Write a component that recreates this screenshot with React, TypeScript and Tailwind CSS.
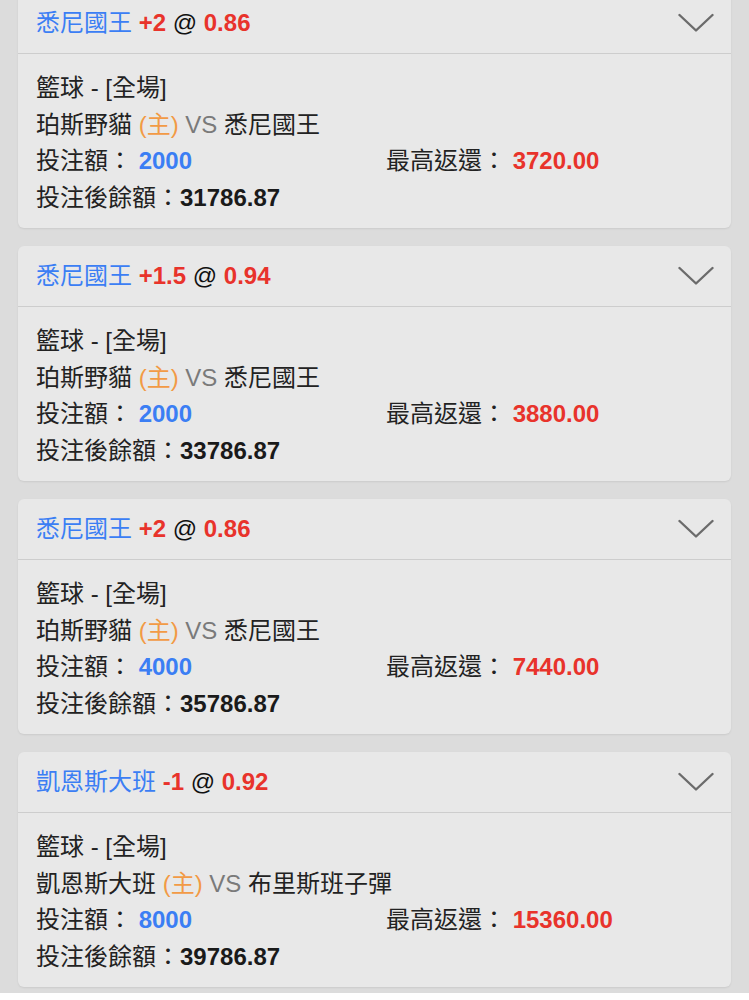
const bets = [
  { team: "悉尼國王", line: "+2", odds: "0.86", home: "珀斯野貓", away: "悉尼國王", stake: "2000", maxReturn: "3720.00", balance: "31786.87" },
  { team: "悉尼國王", line: "+1.5", odds: "0.94", home: "珀斯野貓", away: "悉尼國王", stake: "2000", maxReturn: "3880.00", balance: "33786.87" },
  { team: "悉尼國王", line: "+2", odds: "0.86", home: "珀斯野貓", away: "悉尼國王", stake: "4000", maxReturn: "7440.00", balance: "35786.87" },
  { team: "凱恩斯大班", line: "-1", odds: "0.92", home: "凱恩斯大班", away: "布里斯班子彈", stake: "8000", maxReturn: "15360.00", balance: "39786.87" },
];

const fontStack = "font-['Liberation_Sans','Noto_Sans_CJK_TC',sans-serif]";

function Chevron() {
  return (
    <svg width="36" height="20" viewBox="0 0 36 20" fill="none" className="shrink-0">
      <path d="M1.5 2 L18 17.5 L34.5 2" stroke="#6b6b6b" strokeWidth="2.4" strokeLinecap="round" strokeLinejoin="round" />
    </svg>
  );
}

function BetCard({ bet }: { bet: (typeof bets)[number] }) {
  return (
    <div className="rounded-[6px] bg-[#e8e8e8] shadow-[0_1px_2px_rgba(0,0,0,0.08)]">
      <div className="flex h-[61px] items-center justify-between border-b border-[#cdcdcd] pl-[18px] pr-[17px]">
        <div className="text-[24px] leading-none">
          <span className="text-[#3b7ef4]">{bet.team}</span>{" "}
          <span className="font-bold text-[#e8332b]">{bet.line}</span>{" "}
          <span className="text-[#111]">@</span>{" "}
          <span className="font-bold text-[#e8332b]">{bet.odds}</span>
        </div>
        <Chevron />
      </div>
      <div className="px-[18px] pb-[12px] pt-[16px] text-[24px] leading-[36.5px] text-[#222]">
        <div>籃球 - [全場]</div>
        <div>
          {bet.home} <span className="text-[#f29a45]">(主)</span>{" "}
          <span className="text-[#7a7a7a]">VS</span> {bet.away}
        </div>
        <div className="flex">
          <div className="w-[350px]">
            投注額： <span className="font-bold text-[#3b7ef4]">{bet.stake}</span>
          </div>
          <div>
            最高返還： <span className="font-bold text-[#e8332b]">{bet.maxReturn}</span>
          </div>
        </div>
        <div>
          投注後餘額：<span className="font-bold text-[#1a1a1a]">{bet.balance}</span>
        </div>
      </div>
    </div>
  );
}

export default function App() {
  return (
    <div className={`min-h-[1000px] bg-[#dcdcdc] ${fontStack}`}>
      <div className="-mt-[7px] flex flex-col gap-[18px] px-[18px]">
        {bets.map((bet, i) => (
          <BetCard key={i} bet={bet} />
        ))}
      </div>
    </div>
  );
}
